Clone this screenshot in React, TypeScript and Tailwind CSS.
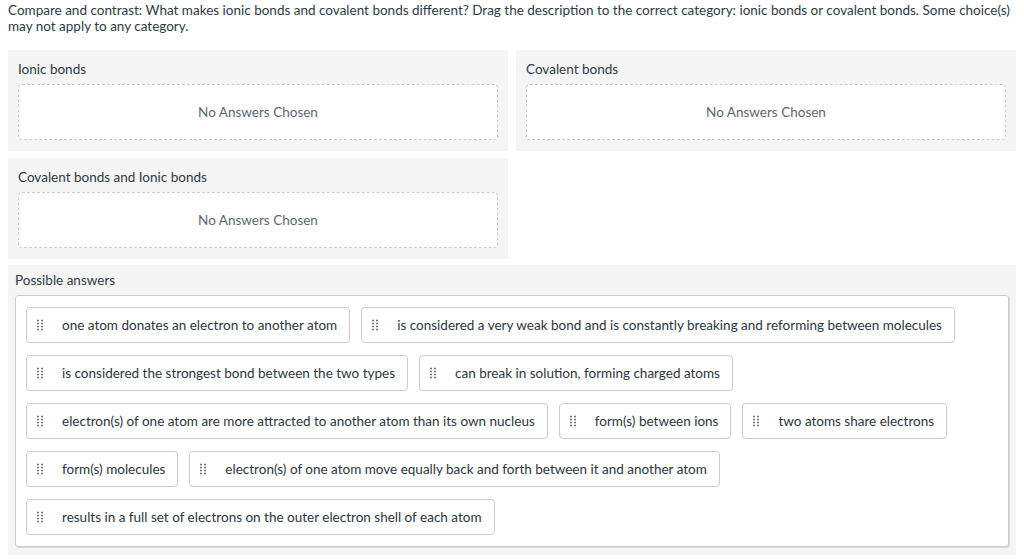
import React from 'react'

const answers = [
  'one atom donates an electron to another atom',
  'is considered a very weak bond and is constantly breaking and reforming between molecules',
  'is considered the strongest bond between the two types',
  'can break in solution, forming charged atoms',
  'electron(s) of one atom are more attracted to another atom than its own nucleus',
  'form(s) between ions',
  'two atoms share electrons',
  'form(s) molecules',
  'electron(s) of one atom move equally back and forth between it and another atom',
  'results in a full set of electrons on the outer electron shell of each atom',
]

function Handle() {
  return (
    <svg width="6" height="12" viewBox="0 0 6 12" className="shrink-0 text-[#3d4852]">
      {[1.5, 4.5, 7.5, 10.5].map((y) =>
        [1, 5].map((x) => <rect key={`${x}-${y}`} x={x - 0.75} y={y - 0.75} width="1.5" height="1.5" fill="currentColor" />)
      )}
    </svg>
  )
}

function Category({ title }: { title: string }) {
  return (
    <div className="bg-[#f5f5f5] px-[10px] pt-[10px] pb-[11px]">
      <div className="h-[24px] leading-[18px] text-[13.5px] text-[#2d3b45]">{title}</div>
      <div className="h-[56px] flex items-center justify-center bg-white border border-dashed border-[#c7cdd1] rounded-[4px] text-[13.5px] text-[#5b6770]">
        No Answers Chosen
      </div>
    </div>
  )
}

export default function App() {
  return (
    <div className="bg-white w-[1024px] h-[559px] px-[8px] pt-[2px] text-[#2d3b45]" style={{ fontFamily: 'Lato, "Open Sans", sans-serif' }}>
      <p className="text-[13.5px] leading-[16px]">
        Compare and contrast: What makes ionic bonds and covalent bonds different? Drag the description to the correct category: ionic bonds or covalent bonds. Some choice(s) may not apply to any category.
      </p>

      <div className="mt-[16px] grid grid-cols-2 gap-x-[8px] gap-y-[7px] w-[1008px]">
        <Category title="Ionic bonds" />
        <Category title="Covalent bonds" />
        <Category title="Covalent bonds and Ionic bonds" />
        <div />
      </div>

      <div className="mt-[6px] w-[1008px] bg-[#f5f5f5] px-[7px] pt-[7px] pb-[8px]">
        <div className="h-[23px] text-[13.5px] leading-[16px]">Possible answers</div>
        <div className="bg-white border border-[#c7cdd1] rounded-[3px] shadow-[1px_1px_0_#d5d9dc] px-[10px] py-[11px] flex flex-wrap gap-x-[11px] gap-y-[12px] h-[252px] content-start">
          {answers.map((a) => (
            <div key={a} className="h-[36px] flex items-center border border-[#c7cdd1] rounded-[4px] bg-white pl-[10px] pr-[12px]">
              <Handle />
              <span className="ml-[19px] text-[13.5px] text-[#2b3640] whitespace-nowrap">{a}</span>
            </div>
          ))}
        </div>
      </div>
    </div>
  )
}
